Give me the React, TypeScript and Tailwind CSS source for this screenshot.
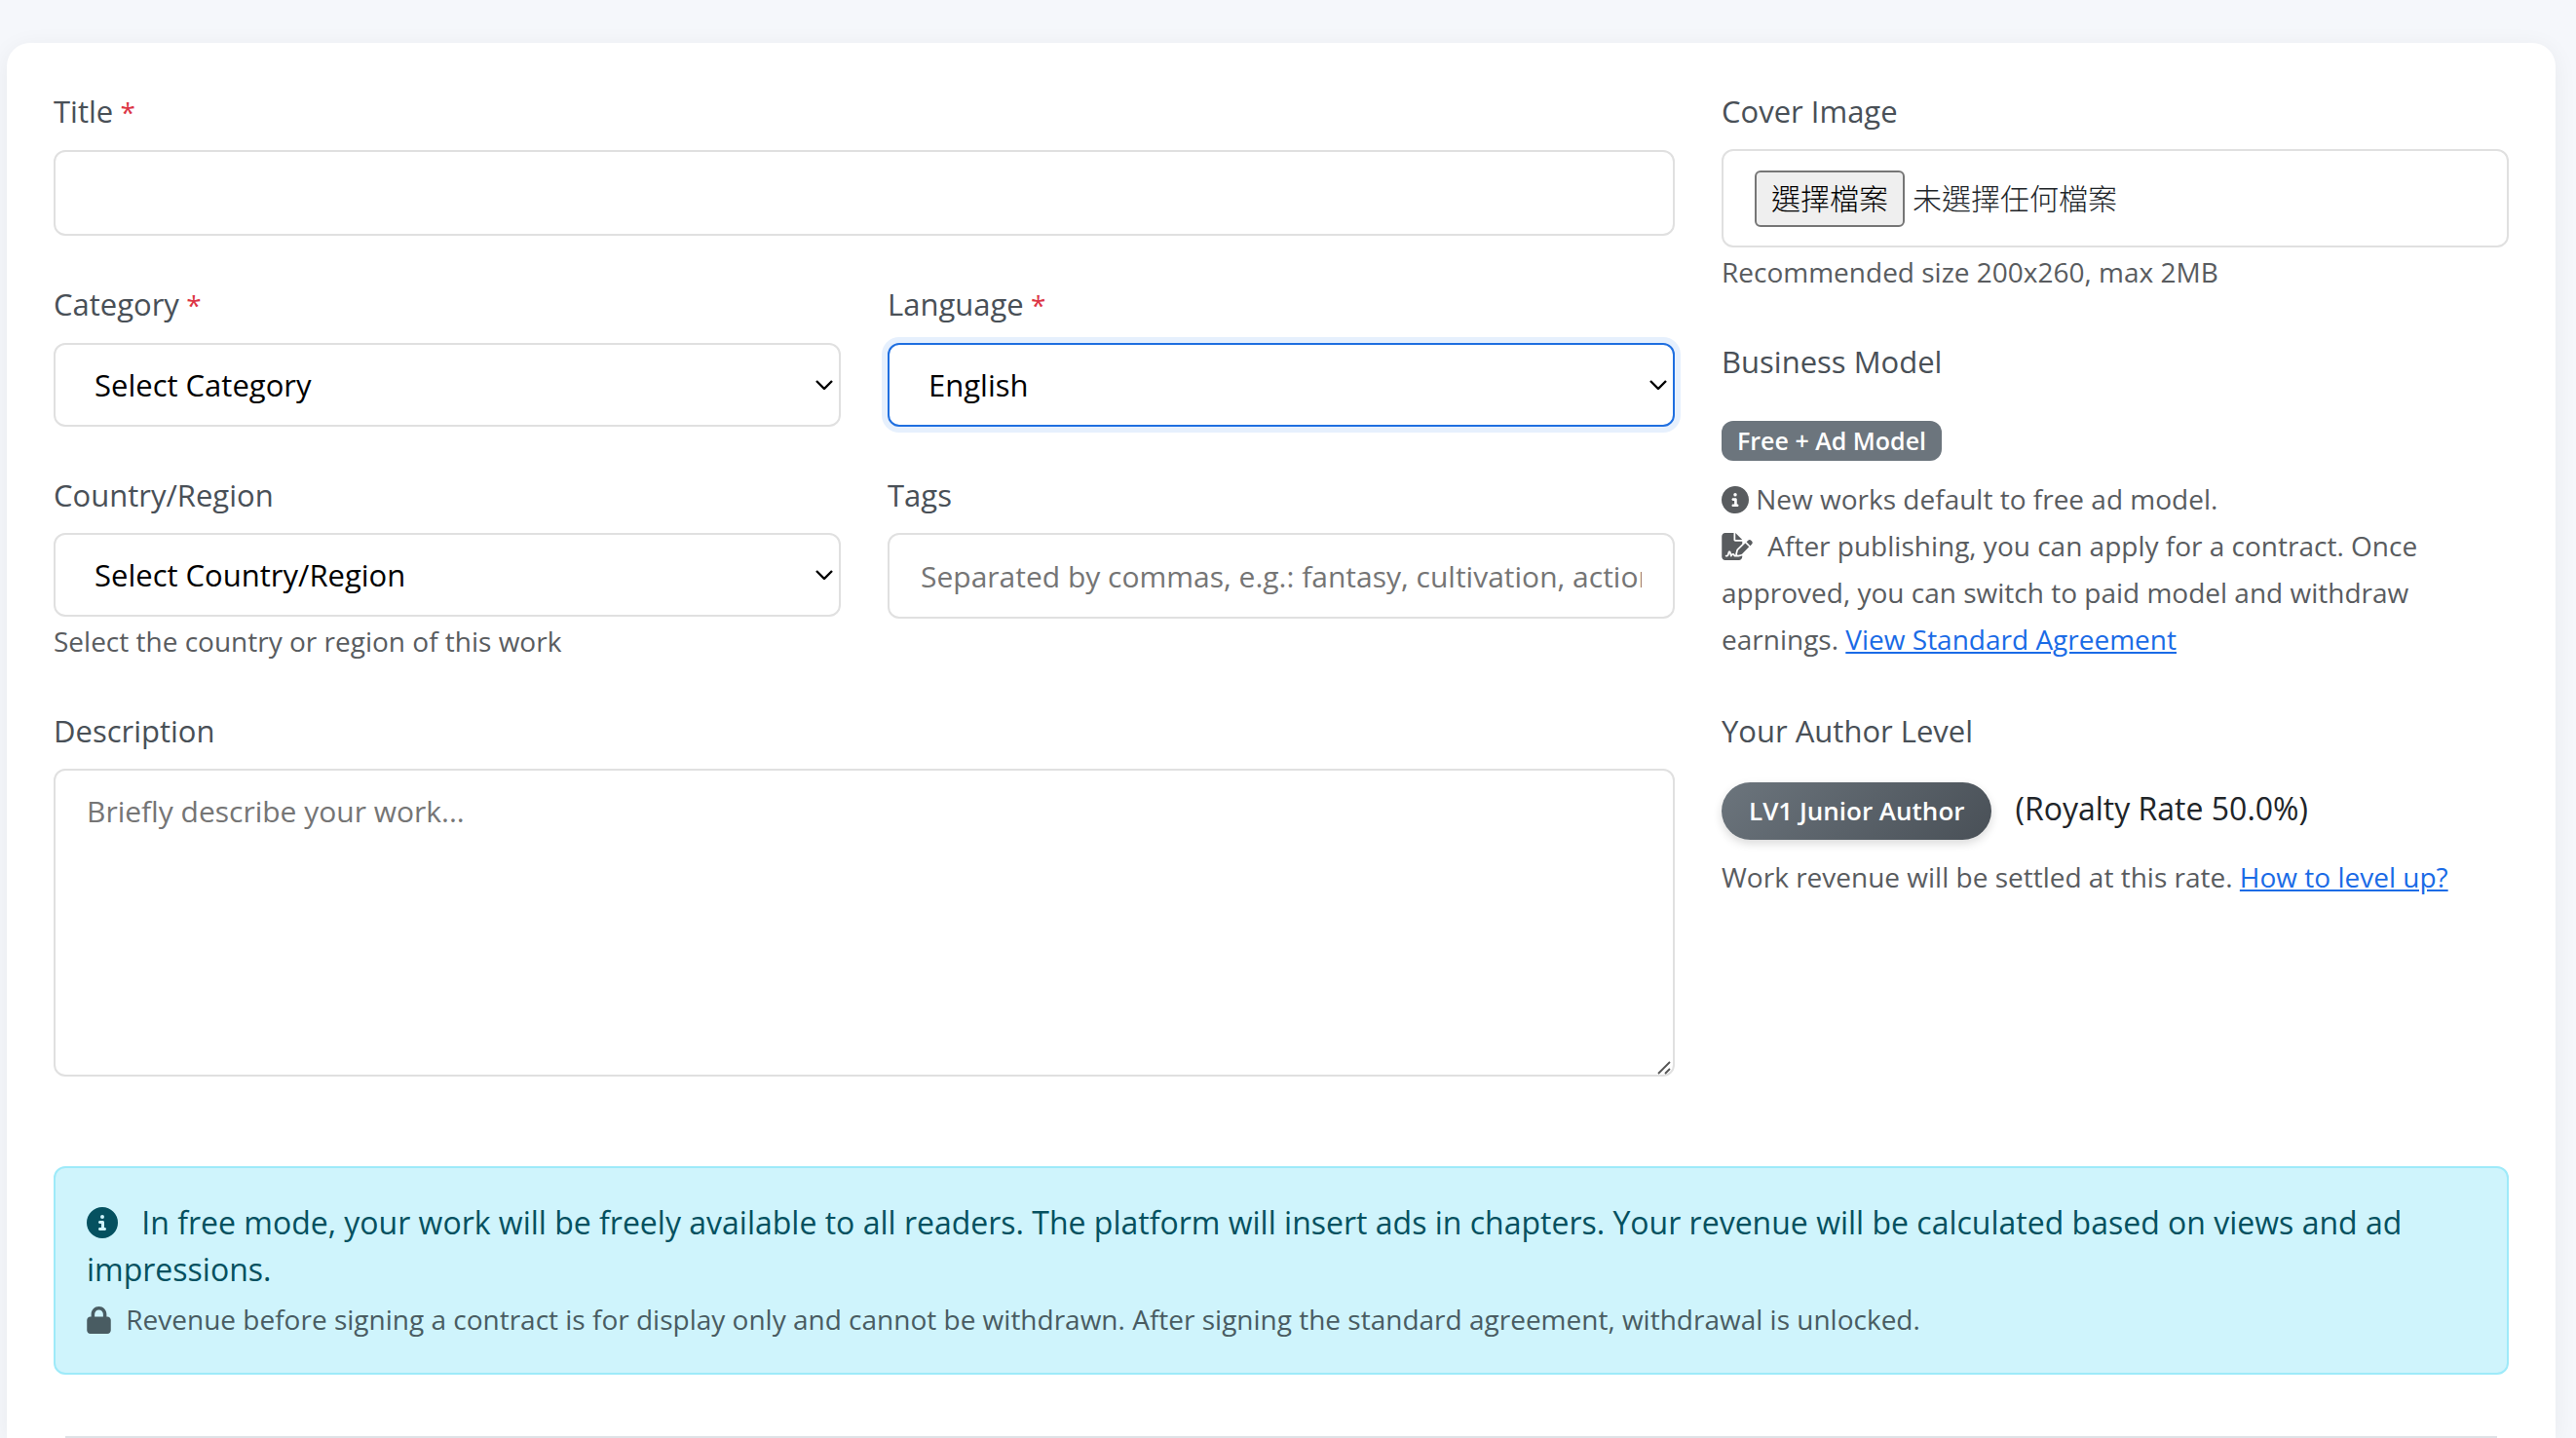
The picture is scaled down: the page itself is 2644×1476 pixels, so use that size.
import React, { useRef } from 'react';
import { FaCircleInfo, FaFileSignature, FaLock } from 'react-icons/fa6';

const control = 'w-full rounded-xl border-2 bg-white leading-[40px]';

const Label: React.FC<{ htmlFor?: string; required?: boolean; children: React.ReactNode }> = ({ htmlFor, required, children }) => (
  <label htmlFor={htmlFor} className="mb-4 block text-[31px] leading-[45px] text-[#495057]">
    {children}
    {required && <span className="text-[28px] text-[#dc3545]"> *</span>}
  </label>
);

const Hint: React.FC<{ children: React.ReactNode }> = ({ children }) => (
  <p className="mt-1 text-[28px] leading-[43px] text-[#595c5f]">{children}</p>
);

const SelectBox: React.FC<{ id: string; options: string[]; focused?: boolean }> = ({ id, options, focused }) => (
  <div className="grid items-center">
    <select
      id={id}
      className={`${control} col-start-1 row-start-1 h-[86px] appearance-none px-10 text-[31px] text-black outline-none ${
        focused ? 'border-[#1f6fe0] ring-6 ring-[#e6f0fd]' : 'border-[#e0e0e0]'
      }`}
    >
      {options.map((o) => (
        <option key={o}>{o}</option>
      ))}
    </select>
    <svg
      viewBox="0 0 18 10"
      className="pointer-events-none col-start-1 row-start-1 mr-2 h-[10px] w-[18px] justify-self-end"
      fill="none"
      stroke="black"
      strokeWidth="2.4"
    >
      <path d="M1 1l8 8 8-8" />
    </svg>
  </div>
);

export default function App() {
  const fileRef = useRef<HTMLInputElement>(null);

  return (
    <div className="flex min-h-screen flex-col bg-[#f5f7fb] pt-11 pr-[21px] pl-[7px] font-['Open_Sans','Noto_Sans_CJK_TC',sans-serif]">
      <form className="flex-1 rounded-t-3xl bg-white px-12 pt-12 shadow-[0_4px_24px_rgba(0,0,0,0.06)]">
        <div className="grid grid-cols-3 gap-x-12">
          <div className="col-span-2 flex flex-col gap-12">
            <div>
              <Label htmlFor="title" required>Title</Label>
              <input id="title" type="text" className={`${control} block h-[88px] border-[#e0e0e0] px-8 text-[30px]`} />
            </div>

            <div className="grid grid-cols-2 gap-x-12">
              <div>
                <Label htmlFor="category" required>Category</Label>
                <SelectBox id="category" options={['Select Category']} />
              </div>
              <div>
                <Label htmlFor="language" required>Language</Label>
                <SelectBox id="language" options={['English']} focused />
              </div>
            </div>

            <div className="grid grid-cols-2 gap-x-12">
              <div>
                <Label htmlFor="country">Country/Region</Label>
                <SelectBox id="country" options={['Select Country/Region']} />
                <Hint>Select the country or region of this work</Hint>
              </div>
              <div>
                <Label htmlFor="tags">Tags</Label>
                <input
                  id="tags"
                  type="text"
                  placeholder="Separated by commas, e.g.: fantasy, cultivation, action"
                  className={`${control} block h-[88px] border-[#e0e0e0] px-8 text-[30px] placeholder:text-[#757575]`}
                />
              </div>
            </div>

            <div>
              <Label htmlFor="description">Description</Label>
              <div className="grid">
                <textarea
                  id="description"
                  placeholder="Briefly describe your work..."
                  className={`${control} col-start-1 row-start-1 h-[316px] resize-none border-[#e0e0e0] px-8 py-5.5 text-[30px] placeholder:text-[#757575]`}
                />
                <svg
                  viewBox="0 0 14 14"
                  className="pointer-events-none col-start-1 row-start-1 mr-1 mb-0.5 h-3.5 w-3.5 self-end justify-self-end"
                  stroke="#555"
                  strokeWidth="1.8"
                >
                  <path d="M1 13L13 1M8 13l5-5" />
                </svg>
              </div>
            </div>
          </div>

          <div className="flex flex-col gap-12">
            <div>
              <Label htmlFor="cover">Cover Image</Label>
              <div className="flex h-[101px] items-center gap-2 rounded-xl border-2 border-[#e0e0e0] px-8 text-[30px] font-light">
                <input ref={fileRef} id="cover" type="file" accept="image/*" className="sr-only" />
                <button
                  type="button"
                  onClick={() => fileRef.current?.click()}
                  className="h-[58px] rounded-md border-2 border-[#767676] bg-[#efefef] px-[15px] leading-[50px] text-black"
                >
                  選擇檔案
                </button>
                <span className="leading-[50px] text-[#212529]">未選擇任何檔案</span>
              </div>
              <Hint>Recommended size 200x260, max 2MB</Hint>
            </div>

            <div>
              <Label>Business Model</Label>
              <div className="flex pt-[22px] pb-[15px]">
                <span className="rounded-xl bg-[#6c757d] px-4 text-[25px] leading-[41px] font-semibold text-white">
                  Free + Ad Model
                </span>
              </div>
              <p className="text-[28px] leading-[48px] text-[#595c5f]">
                <FaCircleInfo className="inline h-7 w-7 align-[-4px]" /> New works default to free ad model.
                <br />
                <FaFileSignature className="mr-2 inline h-7 w-8 align-[-4px]" /> After publishing, you can apply for a
                contract. Once approved, you can switch to paid model and withdraw earnings.{' '}
                <a href="#agreement" className="text-[#1a6be6] underline">View Standard Agreement</a>
              </p>
            </div>

            <div>
              <Label>Your Author Level</Label>
              <div className="flex items-start gap-6 pt-3.5">
                <span className="rounded-full bg-linear-135 from-[#6c757d] to-[#495057] px-7 text-[26px] leading-[59px] font-semibold text-white shadow-[0_4px_10px_rgba(0,0,0,0.15)]">
                  LV1 Junior Author
                </span>
                <span className="text-[32px] leading-[54px] text-[#212529]">(Royalty Rate 50.0%)</span>
              </div>
              <p className="mt-3.5 text-[28px] leading-[48px] text-[#595c5f]">
                Work revenue will be settled at this rate.{' '}
                <a href="#levels" className="text-[#1a6be6] underline">How to level up?</a>
              </p>
            </div>
          </div>
        </div>

        <div className="mt-[92px] rounded-xl border-2 border-[#9eeaf9] bg-[#cff4fc] p-8">
          <p className="mb-1 text-[32px] leading-[48px] text-[#055160]">
            <FaCircleInfo className="mr-4 inline h-8 w-8 align-[-4px]" /> In free mode, your work will be freely
            available to all readers. The platform will insert ads in chapters. Your revenue will be calculated based on
            views and ad impressions.
          </p>
          <p className="text-[28px] leading-[46px] text-[#495c62]">
            <FaLock className="mr-2 inline h-7 w-[25px] align-[-4px]" /> Revenue before signing a contract is for
            display only and cannot be withdrawn. After signing the standard agreement, withdrawal is unlocked.
          </p>
        </div>

        <hr className="mx-3 mt-[63px] border-t-2 border-[#dee2e6]" />
      </form>
    </div>
  );
}
